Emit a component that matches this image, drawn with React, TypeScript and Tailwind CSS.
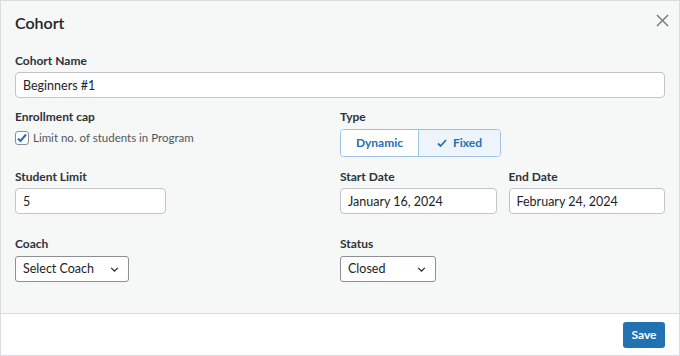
import React, { useState } from 'react';

const font = { fontFamily: 'Lato, "Noto Sans", sans-serif' };

function Chevron() {
  return (
    <svg className="w-[11px] h-[11px] text-[#1d2327]" viewBox="0 0 20 20" fill="none" stroke="currentColor" strokeWidth="2.2">
      <path d="M4 7l6 6 6-6" />
    </svg>
  );
}

export default function App() {
  const [type, setType] = useState('fixed');
  const [limit, setLimit] = useState(true);

  return (
    <div style={font} className="w-[680px] h-[356px] bg-[#f6f7f7] border border-[#dcdcde] flex flex-col text-[#1d2327]">
      {/* header */}
      <div className="flex items-start justify-between pl-[14px] pr-[10px] pt-[11px]">
        <h2 className="text-[16px] leading-[22px] font-semibold">Cohort</h2>
        <button className="text-[#787c82] mt-[2px]">
          <svg className="w-[13px] h-[13px]" viewBox="0 0 14 14" stroke="currentColor" strokeWidth="1.6">
            <path d="M1 1l12 12M13 1L1 13" />
          </svg>
        </button>
      </div>

      <div className="flex-1 px-[14px] pt-[18px]">
        <label className="block text-[12px] font-bold leading-[18px] text-[#2c3338]">Cohort Name</label>
        <input
          defaultValue="Beginners #1"
          className="mt-[2px] w-full h-[26px] px-[7px] text-[12.5px] bg-white border border-[#c3c4c7] rounded-[4px] outline-none"
        />

        <div className="grid grid-cols-[313px_1fr] gap-x-[12px] mt-[10px]">
          <div>
            <label className="block text-[12px] font-bold leading-[18px] text-[#2c3338]">Enrollment cap</label>
            <label className="mt-[3px] h-[18px] flex items-center gap-[4px] text-[11.5px] text-[#50575e]">
              <span
                onClick={() => setLimit(!limit)}
                className="w-[14px] h-[14px] bg-white border border-[#8c8f94] rounded-[3px] flex items-center justify-center"
              >
                {limit && (
                  <svg className="w-[12px] h-[12px] text-[#2271b1]" viewBox="0 0 12 12" fill="none" stroke="currentColor" strokeWidth="2">
                    <path d="M2 6.5l2.5 2.5L10 2.5" />
                  </svg>
                )}
              </span>
              Limit no. of students in Program
            </label>
          </div>
          <div>
            <label className="block text-[12px] font-bold leading-[18px] text-[#2c3338]">Type</label>
            <div className="mt-[3px] flex w-[161px] h-[28px] rounded-[4px] border border-[#9ec2e6] overflow-hidden text-[12px] font-bold text-[#2271b1]">
              <button onClick={() => setType('dynamic')} className={`w-[78px] border-r border-[#9ec2e6] ${type === 'dynamic' ? 'bg-[#eef4fb]' : 'bg-white'}`}>
                Dynamic
              </button>
              <button onClick={() => setType('fixed')} className={`flex-1 flex items-center justify-center gap-[6px] ${type === 'fixed' ? 'bg-[#eef4fb]' : 'bg-white'}`}>
                {type === 'fixed' && (
                  <svg className="w-[10px] h-[10px]" viewBox="0 0 10 10" fill="none" stroke="currentColor" strokeWidth="1.8">
                    <path d="M1 5.5l2.5 2.5L9 2" />
                  </svg>
                )}
                Fixed
              </button>
            </div>
          </div>
        </div>

        <div className="grid grid-cols-[313px_1fr] gap-x-[12px] mt-[11px]">
          <div>
            <label className="block text-[12px] font-bold leading-[18px] text-[#2c3338]">Student Limit</label>
            <input
              defaultValue="5"
              className="mt-[2px] w-[151px] h-[26px] px-[7px] text-[12.5px] bg-white border border-[#c3c4c7] rounded-[4px] outline-none"
            />
          </div>
          <div className="grid grid-cols-2 gap-x-[12px]">
            <div>
              <label className="block text-[12px] font-bold leading-[18px] text-[#2c3338]">Start Date</label>
              <input
                defaultValue="January 16, 2024"
                className="mt-[2px] w-full h-[26px] px-[7px] text-[12.5px] bg-white border border-[#c3c4c7] rounded-[4px] outline-none"
              />
            </div>
            <div>
              <label className="block text-[12px] font-bold leading-[18px] text-[#2c3338]">End Date</label>
              <input
                defaultValue="February 24, 2024"
                className="mt-[2px] w-full h-[26px] px-[7px] text-[12.5px] bg-white border border-[#c3c4c7] rounded-[4px] outline-none"
              />
            </div>
          </div>
        </div>

        <div className="grid grid-cols-[313px_1fr] gap-x-[12px] mt-[21px]">
          <div>
            <label className="block text-[12px] font-bold leading-[18px] text-[#2c3338]">Coach</label>
            <div className="mt-[3px] w-[114px] h-[26px] pl-[7px] pr-[8px] flex items-center justify-between text-[12.5px] bg-white border border-[#8c8f94] rounded-[3px]">
              <span>Select Coach</span>
              <Chevron />
            </div>
          </div>
          <div>
            <label className="block text-[12px] font-bold leading-[18px] text-[#2c3338]">Status</label>
            <div className="mt-[3px] w-[96px] h-[26px] pl-[7px] pr-[8px] flex items-center justify-between text-[12.5px] bg-white border border-[#8c8f94] rounded-[3px]">
              <span>Closed</span>
              <Chevron />
            </div>
          </div>
        </div>
      </div>

      {/* footer */}
      <div className="h-[42px] bg-white border-t border-[#dcdcde] flex items-center justify-end pr-[14px]">
        <button className="h-[26px] w-[42px] bg-[#2271b1] text-white text-[12px] font-bold rounded-[3px]">Save</button>
      </div>
    </div>
  );
}
